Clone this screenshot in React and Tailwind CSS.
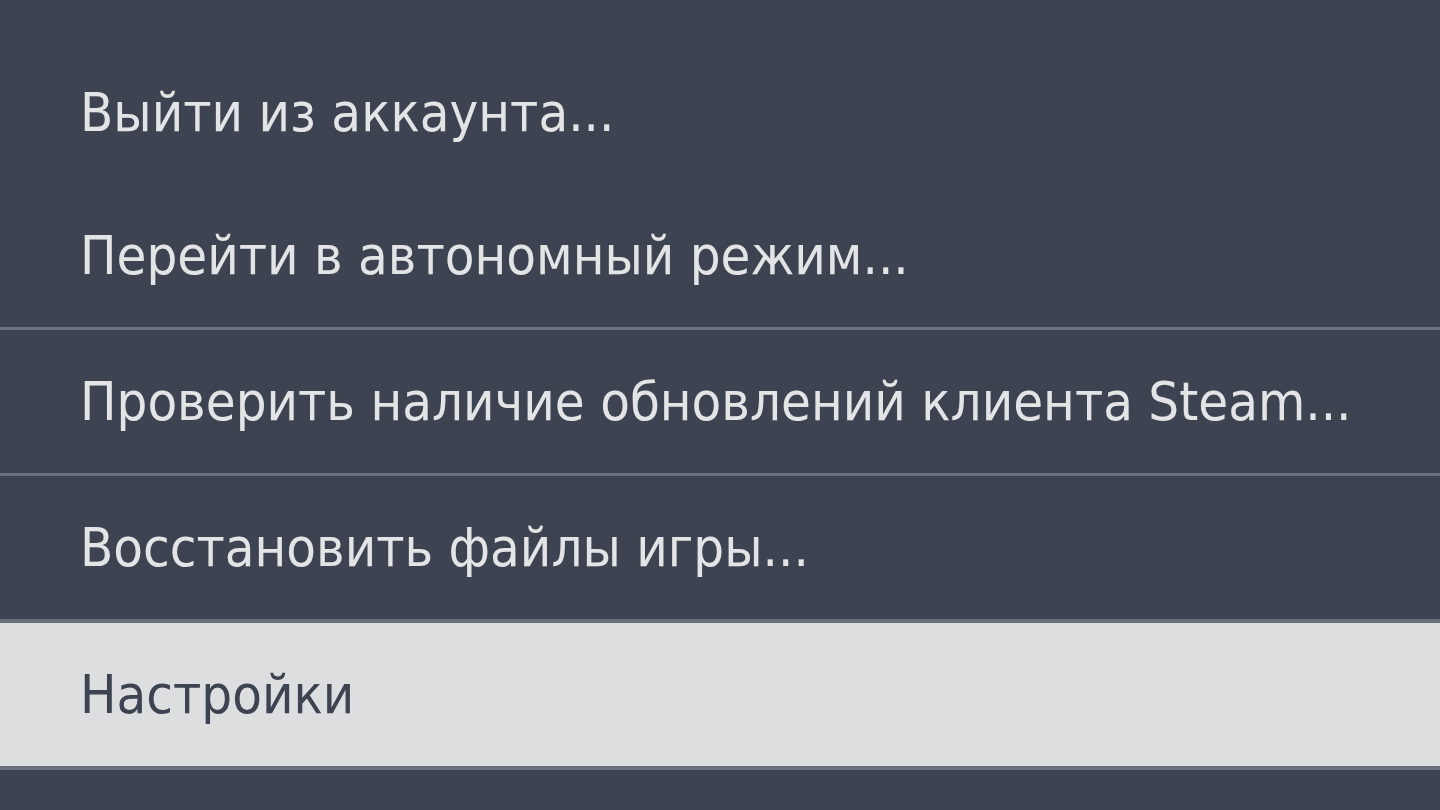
import React from 'react';

const items = [
  { label: 'Сменить аккаунт...', sep: false },
  { label: 'Выйти из аккаунта...', sep: false },
  { label: 'Перейти в автономный режим...', sep: true },
  { label: 'Проверить наличие обновлений клиента Steam...', sep: true },
  { label: 'Восстановить файлы игры...', sep: false },
  { label: 'Настройки', active: true },
];

const App = () => {
  return (
    <div className="w-[1440px] h-[810px] overflow-hidden bg-[#3d4350]" style={{ fontFamily: '"DejaVu Sans Condensed", "Liberation Sans", sans-serif' }}>
      <div className="mt-[-102px]">
        {items.map((item, i) => (
          <div key={i}>
            {item.active ? (
              <div className="border-t-[4px] border-b-[4px] border-[#6b717c] bg-[#dcdee0]">
                <div className="h-[143px] flex items-center pl-[80px] text-[54px] whitespace-nowrap text-[#3d4350]">
                  {item.label}
                </div>
              </div>
            ) : (
              <div className="h-[143px] flex items-center pl-[80px] text-[54px] whitespace-nowrap text-[#e2e4e6]">
                {item.label}
              </div>
            )}
            {item.sep && <div className="h-[3px] bg-[#6b717c]" />}
          </div>
        ))}
      </div>
    </div>
  );
};

export default App;
